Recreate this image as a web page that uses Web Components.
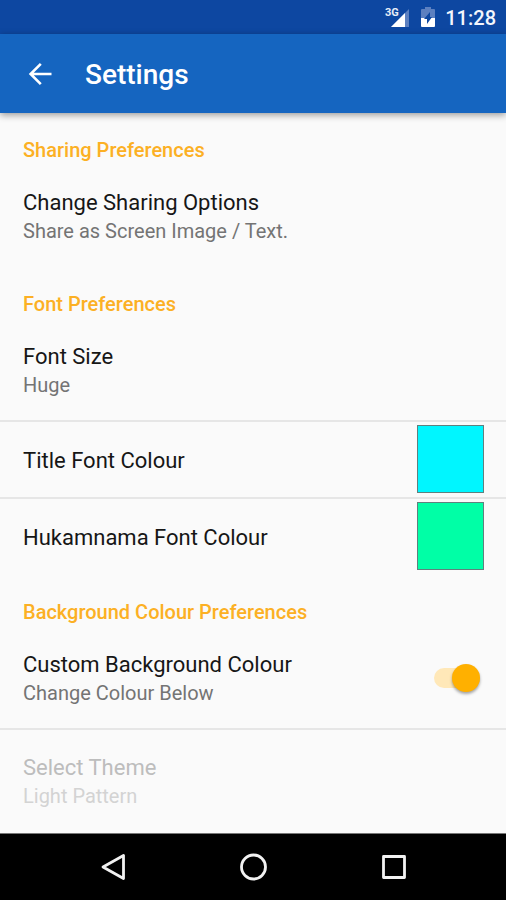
<!DOCTYPE html>
<html lang="en">
<head>
<meta charset="utf-8">
<meta name="viewport" content="width=device-width, initial-scale=1">
<title>Settings</title>
<style>
  body { margin: 0; background: #fafafa; font-family: Roboto, "Noto Sans", sans-serif; color: #161616; }
</style>
</head>
<body>
<settings-screen></settings-screen>

<template id="status-bar">
  <style>
    :host { display: flex; align-items: center; justify-content: flex-end; height: 34px; padding: 0 10px; background: #0d47a1; color: #f4f6fc; font-size: 20px; line-height: 24px; font-weight: 500; box-sizing: border-box; }
    svg { display: block; }
    .signal { margin-right: 12px; }
    .battery { margin-right: 10px; }
    time { padding-top: 2px; }
    text { font: 700 11px Roboto, sans-serif; fill: #e8edf8; }
  </style>
  <svg class="signal" width="26" height="22" viewBox="0 0 26 22" role="img" aria-label="3G signal">
    <path d="M27 2V21H8z" fill="#5c80c0"/>
    <path d="M22 7V21H8z" fill="#fff"/>
    <text x="2" y="10" stroke="#0d47a1" stroke-width="2" paint-order="stroke">3G</text>
  </svg>
  <svg class="battery" width="14" height="20" viewBox="0 0 14 20" role="img" aria-label="Battery charging">
    <path d="M4 0h6v2h3q1 0 1 1v8H0V3q0-1 1-1h3z" fill="#5c80c0"/>
    <path d="M0 11h14v8q0 1-1 1H1q-1 0-1-1z" fill="#fff"/>
    <path d="M9 5v5h2L6 17v-5H3z" fill="#0d47a1"/>
  </svg>
  <time><slot></slot></time>
</template>

<template id="app-toolbar">
  <style>
    :host { display: flex; align-items: center; height: 79px; padding: 0 16px; background: #1565c0; color: #fff; box-sizing: border-box; box-shadow: 0 2px 7px rgba(0,0,0,.4); z-index: 1; }
    button { display: grid; place-items: center; width: 48px; height: 48px; padding: 0; border: 0; background: none; color: inherit; cursor: pointer; }
    h1 { margin: 0 0 0 21px; padding-top: 2px; font-size: 28px; line-height: 32px; font-weight: 500; }
  </style>
  <button type="button" aria-label="Back">
    <svg width="24" height="24" viewBox="0 0 24 24" fill="none" stroke="currentColor" stroke-width="2.6"><path d="M23.500 12H3M12.800 1.800 2.600 12l10.200 10.200"/></svg>
  </button>
  <h1><slot></slot></h1>
</template>

<template id="section-heading">
  <style>
    :host { display: block; padding: 25px 23px 2px; color: #fcb024; }
    h2 { margin: 0; font-size: 20px; line-height: 24px; font-weight: 500; }
  </style>
  <h2><slot></slot></h2>
</template>

<template id="setting-text">
  <style>
    :host { display: block; flex: 1; min-width: 0; padding-top: 3px; }
    .title { display: block; font-size: 22px; line-height: 28px; }
    .summary { display: block; font-size: 20px; line-height: 28px; color: #747474; }
    :host([muted]) .title { color: #bdbdbd; }
    :host([muted]) .summary { color: #d3d3d3; }
  </style>
  <span class="title"><slot></slot></span>
  <slot name="summary" class="summary"></slot>
</template>

<template id="setting-row">
  <style>
    :host { display: block; border-bottom: 2px solid transparent; margin-bottom: -1px; }
    :host([divided]) { border-color: #e6e6e6; }
    button { display: flex; align-items: center; width: 100%; min-height: 76px; padding: 22px 22px 21px 23px; border: 0; background: none; color: inherit; font: inherit; text-align: left; cursor: pointer; box-sizing: border-box; }
    :host([compact]) button { padding-top: 0; padding-bottom: 0; }
  </style>
  <button type="button"><slot></slot></button>
</template>

<template id="setting-switch">
  <style>
    :host { display: block; border-bottom: 2px solid #e6e6e6; margin-bottom: -1px; }
    label { display: flex; align-items: center; padding: 22px 26px 21px 23px; cursor: pointer; }
    input { appearance: none; flex: none; display: flex; align-items: center; width: 46px; height: 20px; margin: 0; background: #ffe8b8; border-radius: 10px; cursor: pointer; }
    input::before { content: ""; flex: none; width: 28px; height: 28px; border-radius: 50%; background: #ececec; box-shadow: 0 2px 3px rgba(0,0,0,.35); }
    input:checked { justify-content: flex-end; }
    input:checked::before { background: #ffb000; }
  </style>
  <label><slot></slot><input type="checkbox" role="switch" checked></label>
</template>

<template id="colour-swatch">
  <style>
    :host { display: block; flex: none; width: 67px; height: 68px; box-sizing: border-box; border: 1px solid #60807e; background: var(--swatch); }
  </style>
</template>

<template id="navigation-bar">
  <style>
    :host { display: block; background: #000; border-top: 1px solid #777; }
    nav { display: flex; justify-content: center; gap: 84px; height: 66px; align-items: center; }
    button { display: grid; place-items: center; width: 56px; height: 56px; padding: 0; border: 0; background: none; color: #f2f2f2; cursor: pointer; }
    svg { fill: none; stroke: currentColor; stroke-width: 2.8; stroke-linejoin: round; }
  </style>
  <nav aria-label="System">
    <button type="button" aria-label="Back"><svg width="28" height="28" viewBox="0 0 28 28"><path d="M24.500 2.500V25.500L4 14z"/></svg></button>
    <button type="button" aria-label="Home"><svg width="28" height="28" viewBox="0 0 28 28"><circle cx="14.500" cy="14" r="12"/></svg></button>
    <button type="button" aria-label="Recent apps"><svg width="28" height="28" viewBox="0 0 28 28"><path d="M4.500 3.500H25.500V24.500H4.500z"/></svg></button>
  </nav>
</template>

<template id="settings-screen">
  <style>
    :host { display: flex; flex-direction: column; min-height: 100vh; }
    main { flex: 1; }
  </style>
  <status-bar>11:28</status-bar>
  <app-toolbar>Settings</app-toolbar>
  <main>
    <section-heading>Sharing Preferences</section-heading>
    <setting-row><setting-text>Change Sharing Options<span slot="summary">Share as Screen Image / Text.</span></setting-text></setting-row>
    <section-heading>Font Preferences</section-heading>
    <setting-row divided><setting-text>Font Size<span slot="summary">Huge</span></setting-text></setting-row>
    <setting-row compact divided><setting-text>Title Font Colour</setting-text><colour-swatch style="--swatch:#00f6ff"></colour-swatch></setting-row>
    <setting-row compact><setting-text>Hukamnama Font Colour</setting-text><colour-swatch style="--swatch:#00ffa6"></colour-swatch></setting-row>
    <section-heading>Background Colour Preferences</section-heading>
    <setting-switch><setting-text>Custom Background Colour<span slot="summary">Change Colour Below</span></setting-text></setting-switch>
    <setting-row disabled><setting-text muted>Select Theme<span slot="summary">Light Pattern</span></setting-text></setting-row>
  </main>
  <navigation-bar></navigation-bar>
</template>

<script>
  class TemplateElement extends HTMLElement {
    constructor() {
      super();
      const template = document.getElementById(this.localName);
      this.attachShadow({ mode: "open" }).append(template.content.cloneNode(true));
    }
  }
  class SettingRow extends TemplateElement {
    connectedCallback() {
      this.shadowRoot.querySelector("button").disabled = this.hasAttribute("disabled");
    }
  }
  customElements.define("status-bar", class extends TemplateElement {});
  customElements.define("app-toolbar", class extends TemplateElement {});
  customElements.define("section-heading", class extends TemplateElement {});
  customElements.define("setting-text", class extends TemplateElement {});
  customElements.define("setting-row", SettingRow);
  customElements.define("setting-switch", class extends TemplateElement {});
  customElements.define("colour-swatch", class extends TemplateElement {});
  customElements.define("navigation-bar", class extends TemplateElement {});
  customElements.define("settings-screen", class extends TemplateElement {});
</script>
</body>
</html>
